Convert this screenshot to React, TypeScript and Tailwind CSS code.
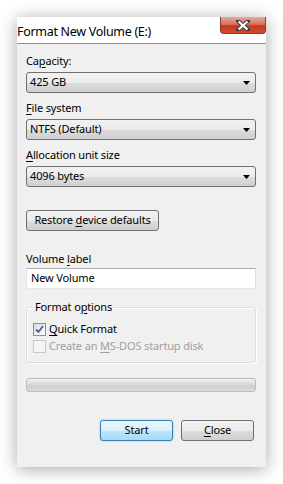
import React from "react";

const font = { fontFamily: '"Noto Sans", "Open Sans", sans-serif' };

const txt = "text-[11px] tracking-[-0.15px]";

function Select({ value }: { value: string }) {
  return (
    <div className={`relative flex h-[21px] w-[230px] items-center rounded-[3px] border border-[#707070] bg-[linear-gradient(#f2f2f2_0%,#ebebeb_50%,#dddddd_51%,#cfcfcf_100%)] pl-[3px] text-black ${txt}`}>
      <span>{value}</span>
      <svg className="absolute right-[5px] top-[8px]" width="7" height="4" viewBox="0 0 7 4">
        <path d="M0 0 H7 L3.5 4 Z" fill="#000" />
      </svg>
    </div>
  );
}

function Label({ children, mt }: { children: React.ReactNode; mt: string }) {
  return <div className={`h-[16px] leading-[16px] text-black ${txt} ${mt}`}>{children}</div>;
}

function Check({ checked, disabled }: { checked?: boolean; disabled?: boolean }) {
  return (
    <div
      className={`flex h-[13px] w-[13px] items-center justify-center border ${
        disabled ? "border-[#c8c8c8] bg-[#f4f4f4]" : "border-[#8e8f8f] bg-[linear-gradient(135deg,#dcdcdc,#ffffff)]"
      }`}
    >
      {checked && (
        <svg width="9" height="9" viewBox="0 0 9 9">
          <path d="M1 4.5 L3.5 7 L8 1" fill="none" stroke="#4a5f97" strokeWidth="1.8" />
        </svg>
      )}
    </div>
  );
}

const u = "underline underline-offset-[2px] decoration-[1px]";

export default function App() {
  return (
    <div className="h-[484px] w-[283px] bg-white pl-[17px] pt-[17px]" style={font}>
      <div className="flex h-[450px] w-[249px] flex-col bg-[#f0f0f0] shadow-[0_2px_16px_rgba(0,0,0,0.35)]">
        {/* Title bar */}
        <div className="relative flex h-[27px] items-start border-b border-[#8f8f8f] bg-white">
          <span className="mt-[7px] text-[12.5px] leading-[16px] tracking-[-0.3px] text-black">Format New Volume (E:)</span>
          <div className="absolute right-0 top-0 flex h-[17px] w-[46px] items-center justify-center rounded-b-[4px] border border-t-0 border-[#8a3a2c] bg-[linear-gradient(#e9a899_0%,#d6735f_45%,#c2391f_55%,#d54a2f_100%)]">
            <svg width="14" height="11" viewBox="0 0 14 11">
              <path d="M2 1 L12 10 M12 1 L2 10" fill="none" stroke="#3a3a3a" strokeWidth="4" strokeLinecap="square" />
              <path d="M2.5 1.5 L11.5 9.5 M11.5 1.5 L2.5 9.5" fill="none" stroke="#ffffff" strokeWidth="2.3" />
            </svg>
          </div>
        </div>

        {/* Body */}
        <div className="flex flex-col pl-[9px]">
          <Label mt="mt-[9px]">
            Ca<span className={u}>p</span>acity:
          </Label>
          <div className="mt-[3px]">
            <Select value="425 GB" />
          </div>
          <Label mt="mt-[7px]">
            <span className={u}>F</span>ile system
          </Label>
          <div className="mt-[3px]">
            <Select value="NTFS (Default)" />
          </div>
          <Label mt="mt-[7px]">
            <span className={u}>A</span>llocation unit size
          </Label>
          <div className="mt-[3px]">
            <Select value="4096 bytes" />
          </div>

          <div className={`mt-[23px] flex h-[21px] w-[133px] items-center justify-center rounded-[3px] border border-[#707070] bg-[linear-gradient(#f2f2f2_0%,#ebebeb_50%,#dddddd_51%,#cfcfcf_100%)] text-black ${txt}`}>
            <span>
              Restore <span className={u}>d</span>evice defaults
            </span>
          </div>

          <Label mt="mt-[20px]">
            Volume <span className={u}>l</span>abel
          </Label>
          <div className={`mt-[1px] flex h-[21px] w-[230px] items-center border border-[#abadb3] border-b-[#e3e9ef] border-l-[#e2e3ea] border-r-[#dbdfe6] bg-white pl-[4px] text-black ${txt}`}>
            New Volume
          </div>

          {/* Group box */}
          <div className="relative mt-[18px] h-[56px] w-[230px] rounded-[3px] border border-[#d5dfe5] shadow-[inset_1px_1px_0_#ffffff,1px_1px_0_#ffffff]">
            <div className={`absolute -top-[9px] left-[7px] bg-[#f0f0f0] px-[1px] leading-[16px] text-black ${txt}`}>
              Format o<span className={u}>p</span>tions
            </div>
            <div className={`ml-[6px] mt-[13px] flex items-center gap-[3px] leading-[16px] text-black ${txt}`}>
              <Check checked />
              <span>
                <span className={u}>Q</span>uick Format
              </span>
            </div>
            <div className={`ml-[6px] mt-[1px] flex items-center gap-[3px] leading-[16px] text-[#a0a0a0] ${txt}`}>
              <Check disabled />
              <span>
                Create an <span className={u}>M</span>S-DOS startup disk
              </span>
            </div>
          </div>

          {/* Progress */}
          <div className="mt-[15px] h-[14px] w-[230px] rounded-[3px] border border-[#bcbcbc] bg-[linear-gradient(#f3f3f3_0%,#e2e2e2_30%,#cfcfcf_60%,#dcdcdc_100%)]" />

          {/* Buttons */}
          <div className="mt-[28px] flex w-[228px] justify-end gap-[8px]">
            <div className={`flex h-[21px] w-[73px] items-center justify-center rounded-[3px] border border-[#3c7fb1] bg-[linear-gradient(#eaf6fd_0%,#d9f0fc_50%,#bee6fd_51%,#a7d9f5_100%)] text-black shadow-[0_0_2px_#62c3f0] ${txt}`}>
              Start
            </div>
            <div className={`flex h-[21px] w-[73px] items-center justify-center rounded-[3px] border border-[#707070] bg-[linear-gradient(#f2f2f2_0%,#ebebeb_50%,#dddddd_51%,#cfcfcf_100%)] text-black ${txt}`}>
              <span>
                <span className={u}>C</span>lose
              </span>
            </div>
          </div>
        </div>
      </div>
    </div>
  );
}
